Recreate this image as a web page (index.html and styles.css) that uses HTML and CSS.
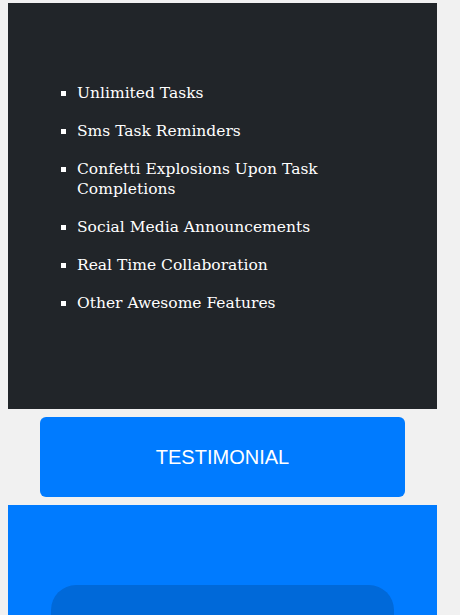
FILE: index.html
```html
<!DOCTYPE html>
<html lang="en">
<head>
<meta charset="utf-8">
<title>Features</title>
<link rel="stylesheet" href="styles.css">
</head>
<body>
  <header class="hero"></header>

  <section class="features">
    <ul class="feature-list">
      <li>Unlimited Tasks</li>
      <li>Sms Task Reminders</li>
      <li>Confetti Explosions Upon Task Completions</li>
      <li>Social Media Announcements</li>
      <li>Real Time Collaboration</li>
      <li>Other Awesome Features</li>
    </ul>
  </section>

  <button class="testimonial-btn" type="button">TESTIMONIAL</button>

  <section class="testimonials">
    <div class="testimonial-card"></div>
  </section>

  <script src="script.js"></script>
</body>
</html>
```

FILE: styles.css
```css
html, body {
  background: #f1f1f1;
}

body {
  margin: 8px 23px 8px 8px;
  font-family: "Liberation Sans", Arial, sans-serif;
}

.hero {
  height: 684px;
  margin-bottom: 8px;
}

.features {
  background: #212529;
  color: #ffffff;
  padding: 80px 29px;
  height: 406px;
  box-sizing: border-box;
}

.feature-list {
  margin: 0;
  padding-left: 40px;
  list-style: square;
  font-family: "DejaVu Serif", Georgia, serif;
  font-size: 15.5px;
  line-height: 20px;
}

.feature-list li {
  margin-bottom: 18px;
}

.testimonial-btn {
  display: block;
  width: 85%;
  height: 80px;
  margin: 8px auto;
  border: none;
  border-radius: 6px;
  background: #007bff;
  color: #ffffff;
  font-family: "Liberation Sans", Arial, sans-serif;
  font-size: 20px;
  cursor: pointer;
}

.testimonials {
  background: #007bff;
  padding: 80px 0;
  min-height: 1788px;
  box-sizing: border-box;
}

.testimonial-card {
  width: 80%;
  margin: 0 auto;
  height: 400px;
  background: #0069d9;
  border-radius: 25px;
}
```

FILE: script.js
```js
window.scrollTo(0, 697);
window.addEventListener('load', function () {
  window.scrollTo(0, 697);
});
```
